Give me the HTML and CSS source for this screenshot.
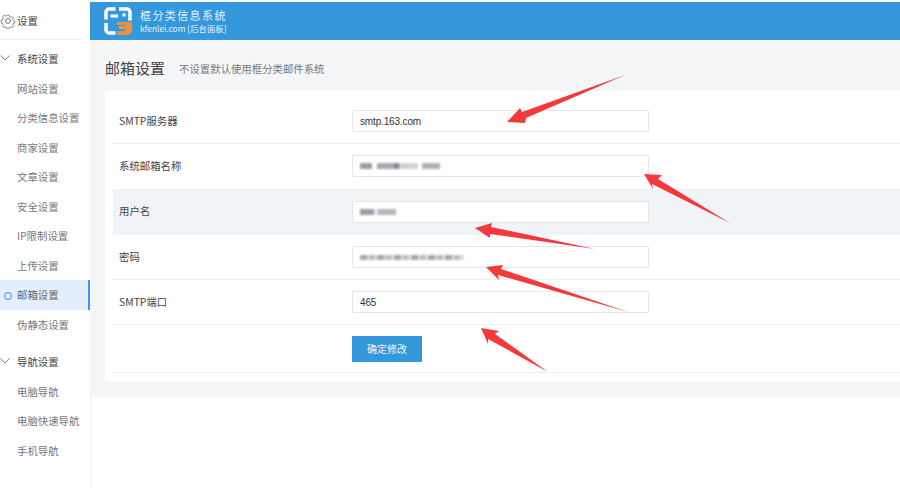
FILE: index.html
```html
<!DOCTYPE html>
<html lang="zh">
<head>
<meta charset="utf-8">
<title>邮箱设置</title>
<link rel="stylesheet" href="styles.css">
</head>
<body>
<div class="app">
  <aside class="sidebar">
    <div class="side-title">
      <svg class="gear" viewBox="0 0 16 16" width="16" height="16"><circle cx="8" cy="8" r="2.4"/><path d="M6.8 1h2.4l.4 2 1.500.7 1.800-1 1.600 1.700-1 1.700.6 1.500 2 .5v2.400l-2 .5-.6 1.500 1 1.700-1.600 1.700-1.800-1-1.500.7-.4 2H6.800l-.4-2-1.500-.7-1.800 1-1.600-1.700 1-1.700-.6-1.500-2-.5V6.600l2-.5.6-1.500-1-1.700 1.600-1.700 1.800 1 1.500-.7z" transform="translate(1.300 1.300) scale(.84)"/></svg>
      <span>设置</span>
    </div>
    <div class="group">
      <div class="group-head"><svg class="chev" viewBox="0 0 10 6" width="10" height="6"><path d="M.5.5 5 5 9.500.5"/></svg>系统设置</div>
      <a class="item">网站设置</a>
      <a class="item">分类信息设置</a>
      <a class="item">商家设置</a>
      <a class="item">文章设置</a>
      <a class="item">安全设置</a>
      <a class="item">IP限制设置</a>
      <a class="item">上传设置</a>
      <a class="item active">邮箱设置</a>
      <a class="item">伪静态设置</a>
    </div>
    <div class="group group-second">
      <div class="group-head"><svg class="chev" viewBox="0 0 10 6" width="10" height="6"><path d="M.5.5 5 5 9.500.5"/></svg>导航设置</div>
      <a class="item">电脑导航</a>
      <a class="item">电脑快速导航</a>
      <a class="item">手机导航</a>
    </div>
  </aside>
  <main class="main">
    <header class="topbar">
      <svg class="logo" viewBox="0 0 28 28" width="28" height="28">
        <path class="ws" d="M2 12.500V5a3 3 0 0 1 3-3h6.500M15 2h8a3 3 0 0 1 3 3v8.500M2 16v7a3 3 0 0 0 3 3h6.500"/>
        <path class="ws thin" d="M6.500 9H14M18.500 8h3"/>
        <path class="o" d="M13 15h15v8a5 5 0 0 1-5 5H13v-4h8v-2h-6v-3h6v-1h-8z"/>
      </svg>
      <div class="brand">
        <div class="brand-name">框分类信息系统</div>
        <div class="brand-sub">kfenlei.com [后台面板]</div>
      </div>
    </header>
    <section class="content">
      <div class="page-head">
        <h1>邮箱设置</h1>
        <span class="hint">不设置默认使用框分类邮件系统</span>
      </div>
      <form class="card">
        <div class="row"><label>SMTP服务器</label><input class="field" type="text" value="smtp.163.com"></div>
        <div class="row"><label>系统邮箱名称</label><div class="field masked"><i class="blur w1"></i></div></div>
        <div class="row row-hover"><label>用户名</label><div class="field masked"><i class="blur w2"></i></div></div>
        <div class="row"><label>密码</label><div class="field masked"><i class="blur w3"></i></div></div>
        <div class="row"><label>SMTP端口</label><input class="field" type="text" value="465"></div>
        <div class="row row-submit"><button type="button" class="btn">确定修改</button></div>
      </form>
    </section>
  </main>
  <svg class="arrows" viewBox="0 0 900 489" width="900" height="489">
    <polygon points="507,122 520,108 522,112 625,75 526,118 525,123"/>
    <polygon points="644,174 662,175 658,179 730,223 652,184 653,189"/>
    <polygon points="475,228 492,223 491,227 595,249 490,234 490,238"/>
    <polygon points="486,267 503,265 501,269 628,312 498,275 499,280"/>
    <polygon points="481,328 499,331 495,334 548,372 488,339 488,344"/>
  </svg>
</div>
</body>
</html>
```
FILE: styles.css
```css
* { box-sizing: border-box; }
html, body { margin: 0; height: 100%; }
body {
  font-family: "Noto Sans CJK SC", "Open Sans", sans-serif;
  font-size: 10.4px;
  color: #555;
  background: #fff;
  overflow: hidden;
}
.app { position: relative; display: flex; width: 900px; height: 489px; }

.sidebar {
  width: 91px;
  flex: none;
  height: 488px;
  margin-right: -1px;
  padding-top: 2px;
  border-right: 1px solid #f1f2f4;
}
.side-title {
  display: flex;
  align-items: center;
  gap: 1px;
  height: 38px;
  margin-right: 8px;
  border-bottom: 1px solid #ececec;
  font-size: 10.4px;
  color: #444;
}
.gear { fill: none; stroke: #666; stroke-width: .9; flex: none; }
.group { padding-top: 4px; }
.group-second { padding-top: 8px; }
.group-head {
  position: relative;
  height: 29.500px;
  line-height: 29px;
  padding-left: 17px;
  color: #444;
}
.chev {
  position: absolute;
  left: 0;
  top: 11px;
  fill: none;
  stroke: #666;
  stroke-width: .8;
}
.item {
  display: block;
  height: 29.500px;
  line-height: 29px;
  padding-left: 17px;
  color: #777;
  white-space: nowrap;
}
.item.active {
  position: relative;
  width: 90px;
  background: #e4effd;
  border-right: 2px solid #4a8fe7;
  color: #666;
}
.item.active::before {
  content: "";
  position: absolute;
  left: 4px;
  top: 12px;
  width: 6px;
  height: 6px;
  border: 1px solid #3a86d8;
  border-radius: 50%;
}

.main { flex: 1; min-width: 0; padding-top: 2px; }
.topbar {
  display: flex;
  align-items: center;
  gap: 8px;
  height: 38px;
  padding-left: 14px;
  background: #3498db;
  color: #fff;
}
.logo { flex: none; }
.logo .ws { fill: none; stroke: #fff; stroke-width: 3.500; stroke-linecap: butt; }
.logo .thin { stroke-width: 3; }
.logo .o { fill: #f0913a; }
.brand { line-height: 1; color: #e6f2fa; }
.brand-name { font-size: 11px; letter-spacing: 1.400px; margin-bottom: 3px; }
.brand-sub { font-size: 8.400px; }

.content { height: 357px; padding: 0 0 16px 15px; background: #f5f6f8; }
.page-head { display: flex; align-items: center; height: 51px; padding-top: 6px; gap: 14px; }
.page-head h1 { margin: 0 0 3px; font-size: 15px; font-weight: 400; color: #444; }
.hint { font-size: 10.400px; color: #777; }

.card { height: 290px; padding: 8px 0 8px 8px; background: #fff; }
.row {
  display: flex;
  align-items: center;
  height: 45.300px;
  border-bottom: 1px solid #eff0f2;
  color: #444;
}
.row-hover { background: #f1f4f7; border-bottom-color: #f1f4f7; }
.row-submit { height: 48px; }
.row label { width: 239px; flex: none; padding: 0 0 2px 6px; font-size: 10.400px; }
.row-submit .btn { margin-left: 239px; }
.field {
  width: 297px;
  height: 22px;
  padding: 0 7px;
  border: 1px solid #e6e6e6;
  border-radius: 2px;
  background: #fff;
  font: 10px "Liberation Sans", Arial, sans-serif;
  letter-spacing: -.15px;
  color: #333;
  outline: 0;
}
.masked { display: flex; align-items: center; }
.blur {
  display: block;
  height: 6px;
  filter: blur(1.200px);
}
.w1 {
  width: 80px;
  background: linear-gradient(90deg, #9b9ba6 0 12px, #fff 12px 17px, #a9a9b2 17px 34px, #888893 34px 39px, #d0d0d6 39px 58px, #fff 58px 62px, #b0b0b8 62px 80px);
}
.w2 {
  width: 36px;
  background: linear-gradient(90deg, #9b9ba6 0 14px, #e8e8ec 14px 18px, #b6b6be 18px 36px);
}
.w3 {
  width: 103px;
  height: 5px;
  background: repeating-linear-gradient(90deg, #a5a5ae 0 7px, #d9d9de 7px 9px, #bcbcc4 9px 15px, #e8e8ec 15px 17px);
}
.btn {
  width: 70px;
  height: 26px;
  padding: 0;
  border: 0;
  background: #3498db;
  color: #eef7fd;
  font: 10px "Noto Sans CJK SC", sans-serif;
}

.arrows { position: absolute; left: 0; top: 0; pointer-events: none; }
.arrows polygon { fill: #f4393a; }
```
